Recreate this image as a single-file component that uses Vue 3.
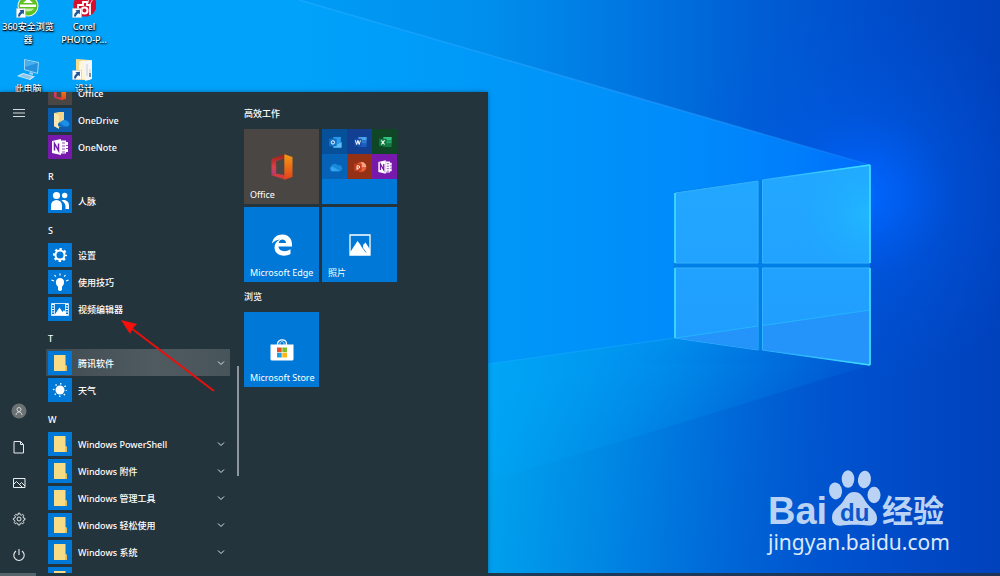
<script setup>
const shortcuts = [
  { icon: 'browser360', label: '360安全浏览器' },
  { icon: 'corel', label: 'Corel PHOTO-P...' },
  { icon: 'pc', label: '此电脑' },
  { icon: 'design', label: '设计' },
]

const rail = [
  { icon: 'user', label: '用户' },
  { icon: 'doc', label: '文档' },
  { icon: 'image', label: '图片' },
  { icon: 'cog', label: '设置' },
  { icon: 'power', label: '电源' },
]

const rows = [
  { icon: 'office', label: 'Office', tone: 'grey' },
  { icon: 'onedrive', label: 'OneDrive', tone: 'deep' },
  { icon: 'onenote', label: 'OneNote', tone: 'purple' },
  { heading: 'R' },
  { icon: 'people', label: '人脉' },
  { heading: 'S' },
  { icon: 'gear', label: '设置' },
  { icon: 'bulb', label: '使用技巧' },
  { icon: 'video', label: '视频编辑器' },
  { heading: 'T' },
  { icon: 'folder', label: '腾讯软件', folder: true, active: true },
  { icon: 'sun', label: '天气' },
  { heading: 'W' },
  { icon: 'folder', label: 'Windows PowerShell', folder: true },
  { icon: 'folder', label: 'Windows 附件', folder: true },
  { icon: 'folder', label: 'Windows 管理工具', folder: true },
  { icon: 'folder', label: 'Windows 轻松使用', folder: true },
  { icon: 'folder', label: 'Windows 系统', folder: true },
  { icon: 'folder', label: '', folder: true },
]

const minis = ['outlook', 'word', 'excel', 'cloud', 'ppt', 'onenote']
</script>

<template>
  <svg class="defs" aria-hidden="true">
    <defs>
      <linearGradient id="g-off" x1="0" y1="0" x2="0" y2="1">
        <stop offset="0" stop-color="#f59a12" /><stop offset="1" stop-color="#e2401b" />
      </linearGradient>
      <linearGradient id="g-off2" x1="0" y1="0" x2="0" y2="1">
        <stop offset="0" stop-color="#9c1f16" /><stop offset=".6" stop-color="#d8404a" /><stop offset="1" stop-color="#b13a80" />
      </linearGradient>
      <symbol id="i-office" viewBox="0 0 24 24">
        <path d="M14 1 3 5v14l4-1.500V7l7-2.500z" fill="url(#g-off2)" />
        <path d="M3 19l4-1.500 8 1.500v4z" fill="#d43b3f" />
        <path d="M14 1l7 2.500v17L14 23z" fill="url(#g-off)" />
      </symbol>
      <symbol id="i-onedrive" viewBox="0 0 24 24">
        <path d="M6 5l5-1h5v12l-6 4-4-2z" fill="#f3d488" />
        <path d="M6 5l5 2v14l-5-3z" fill="#fbe6ae" />
        <path d="M11 18.500a3 3 0 0 1 2-5 4 4 0 0 1 6-.5 3 3 0 0 1 1 5.500z" fill="#1a8fe3" />
        <path d="M11 18.500a3 3 0 0 1 0-4l6 4z" fill="#0f6cc4" />
      </symbol>
      <symbol id="i-onenote" viewBox="0 0 24 24">
        <path d="M13 5.500h5v1.500h2v10h-2v1.500h-5z" fill="#fff" />
        <path d="M14 8h3M14 11h3M14 14h3M14 17h3M18 10.500h2M18 13.500h2" stroke="#7719aa" stroke-width=".8" />
        <path d="M4 6l9-2v16l-9-2z" fill="#fff" />
        <path d="M6.500 15.500v-7l4 7v-7" fill="none" stroke="#7719aa" stroke-width="1.500" />
      </symbol>
      <symbol id="i-people" viewBox="0 0 24 24">
        <circle cx="8.500" cy="6.500" r="3.600" fill="#fff" />
        <circle cx="16.700" cy="6.500" r="2.700" fill="#fff" />
        <path d="M3 21v-4.500a5.500 5.500 0 0 1 11 0V21z" fill="#fff" />
        <path d="M13.500 11.500c4-1.500 7.500 1 7.500 5V20h-3.500c.5-4-1-7-4-8.500z" fill="#fff" />
      </symbol>
      <symbol id="i-gear" viewBox="0 0 24 24">
        <circle cx="12" cy="12" r="4.500" fill="none" stroke="#fff" stroke-width="2" />
        <circle cx="12" cy="12" r="6" fill="none" stroke="#fff" stroke-width="2" stroke-dasharray="2.400 2.312" stroke-dashoffset="1.200" />
      </symbol>
      <symbol id="i-bulb" viewBox="0 0 24 24">
        <path d="M10 20v-3.200c-3.200-2.800-2.800-8.800 2-8.800s5.200 6 2 8.800V20q-2 2-4 0z" fill="#fff" />
        <path d="M12 3.500v2M6.500 5l1.300 1.700M17.500 5l-1.300 1.700M3.500 10l2.500 1M20.500 10L18 11" stroke="#fff" stroke-width="1.200" />
      </symbol>
      <symbol id="i-video" viewBox="0 0 24 24">
        <path d="M3.500 6.500h17v12h-17zM6.500 6.500v12M17.500 6.500v12" fill="none" stroke="#fff" stroke-width=".8" />
        <path d="M5 7v11M19 7v11" stroke="#fff" stroke-dasharray="1 1.500" stroke-width="2" />
        <path d="M6.500 18l5-7.500 3 4.500 1.500-2 2 3v2.500z" fill="#fff" />
      </symbol>
      <symbol id="i-folder" viewBox="0 0 24 24">
        <path d="M6 4h11.500v10l1.500 1v5H6z" fill="#f7dc85" />
        <path d="M17.500 14l1.500 1v5h-2z" fill="#e8bd58" />
      </symbol>
      <symbol id="i-sun" viewBox="0 0 24 24">
        <circle cx="12" cy="12" r="4.500" fill="#fff" />
        <circle cx="12" cy="12" r="6.300" fill="none" stroke="#fff" stroke-width="1.600" stroke-dasharray="1.300 3.648" stroke-dashoffset=".65" />
      </symbol>
      <symbol id="i-user" viewBox="0 0 18 18">
        <circle cx="9" cy="9" r="7.500" fill="#6c7174" />
        <circle cx="9" cy="7.500" r="2" fill="none" stroke="#d5d8d9" />
        <path d="M6 13c.2-4 5.800-4 6 0" fill="none" stroke="#d5d8d9" />
      </symbol>
      <symbol id="i-doc" viewBox="0 0 18 18">
        <path d="M4 3.500h6.500l3 3v8.500H4zM10.500 3.500v3h3" fill="none" stroke="#e8ecee" />
      </symbol>
      <symbol id="i-image" viewBox="0 0 18 18">
        <path d="M3.500 4.500h11.500v9H3.500zM3.500 10.500l3-3 5.500 5.500M9.500 10.500l2-2 3.500 3.500" fill="none" stroke="#e8ecee" />
      </symbol>
      <symbol id="i-cog" viewBox="0 0 18 18">
        <circle cx="9" cy="9" r="2" fill="none" stroke="#e8ecee" />
        <path d="M8.200 3.200h1.600l.4 1.500 1.100.5 1.400-.8 1.100 1.100-.8 1.400.5 1.100 1.500.4v1.400l-1.500.4-.5 1.100.8 1.400-1.100 1.100-1.400-.8-1.100.5-.4 1.500H8.200l-.4-1.500-1.100-.5-1.400.8-1.100-1.100.8-1.400-.5-1.100L3.400 9.800V8.400L4.900 8l.5-1.100-.8-1.400 1.100-1.100 1.400.8 1.100-.5z" fill="none" stroke="#e8ecee" />
      </symbol>
      <symbol id="i-power" viewBox="0 0 18 18">
        <path d="M6 5a5.200 5.200 0 1 0 6 0M9 3v6" fill="none" stroke="#e8ecee" stroke-width="1.100" />
      </symbol>
      <symbol id="i-edge" viewBox="0 0 24 24">
        <path d="M2 10.500C3 4.500 7 1.500 12.500 1.500c6 0 9.500 4.500 9.500 9.500v2.500H8.500c.3 5 7 6 12 2.800v4.700c-7 3.700-16 1-16-6.500 0-3.500 2-6.500 5.500-8-3.500.3-6 1.800-8 4zM8.700 10H16c0-4.500-6.500-5-7.300 0z" fill="#fff" />
      </symbol>
      <symbol id="i-photos" viewBox="0 0 24 24">
        <path d="M2 2h20v20H2z" fill="none" stroke="#fff" stroke-width="1.300" />
        <path d="M2 19.500L9.500 8l5.500 7v-3l2.500-2.500 4.500 7v5.500H2z" fill="#fff" />
        <path d="M13 12.500l5 7" stroke="#0078d7" stroke-width=".8" />
      </symbol>
      <symbol id="i-store" viewBox="0 0 24 24">
        <path d="M7.500 7V6c0-5.500 9-5.500 9 0v1" fill="none" stroke="#fff" stroke-width="1.300" />
        <path d="M10 7V5.500C10 3 14 3 14 5.500V7" fill="none" stroke="#bfe0f8" />
        <path d="M.5 6.500h23v14.500q0 1.500-1.500 1.500H2q-1.500 0-1.500-1.500z" fill="#fff" />
        <path d="M7 9.500h4.700v4.700H7z" fill="#e8502a" /><path d="M12.300 9.500H17v4.700h-4.700z" fill="#7fba2a" />
        <path d="M7 14.800h4.700v4.700H7z" fill="#19a0e8" /><path d="M12.300 14.800H17v4.700h-4.700z" fill="#fdb813" />
      </symbol>
      <symbol id="i-outlook" viewBox="0 0 24 24">
        <path d="M10 6h9v11h-9z" fill="#2a9be8" /><path d="M10 12l5 3 5-3v7H10z" fill="#5cc0f5" />
        <path d="M5 8h9v9H5z" fill="#1170c8" /><circle cx="9.500" cy="12.500" r="2" fill="none" stroke="#fff" stroke-width="1.200" />
      </symbol>
      <symbol id="i-word" viewBox="0 0 24 24">
        <path d="M10 6h10v4H10z" fill="#4aa5ee" /><path d="M10 10h10v4H10z" fill="#2b7cd3" /><path d="M10 14h10v4H10z" fill="#1b5dbe" />
        <path d="M5 8h9v9H5z" fill="#174ea8" /><path d="M6.500 10l1.500 5 1.500-5 1.500 5 1.500-5" fill="none" stroke="#fff" stroke-width="1.200" />
      </symbol>
      <symbol id="i-excel" viewBox="0 0 24 24">
        <path d="M10 6h10v4H10z" fill="#33c481" /><path d="M10 10h10v4H10z" fill="#21a366" /><path d="M10 14h10v4H10z" fill="#157a43" />
        <path d="M5 8h9v9H5z" fill="#107c41" /><path d="M7.500 10l4 5M11.500 10l-4 5" stroke="#fff" stroke-width="1.300" />
      </symbol>
      <symbol id="i-cloud" viewBox="0 0 24 24">
        <path d="M8 17a3.500 3.500 0 0 1-.5-6.500 5 5 0 0 1 8-.5 3.600 3.600 0 0 1 2.500 7z" fill="#1987da" />
        <path d="M8 17a3.500 3.500 0 0 1 1-5.500l9 5.500z" fill="#35a4ee" />
      </symbol>
      <symbol id="i-ppt" viewBox="0 0 24 24">
        <circle cx="13.500" cy="12" r="6" fill="#e8603c" /><path d="M13.500 6a6 6 0 0 1 6 6h-6z" fill="#ffa084" />
        <path d="M5 8h9v9H5z" fill="#c43e1c" /><path d="M8.500 15.500v-5h1.500a1.500 1.500 0 0 1 0 3H8.500" fill="none" stroke="#fff" stroke-width="1.200" />
      </symbol>
      <symbol id="i-link" viewBox="0 0 10 10">
        <path d="M.5.500h9v9h-9z" fill="#fff" stroke="#b8c4cc" stroke-width=".6" />
        <path d="M2 8.500C2 6 3 4.800 4.600 3.700L3.500 2.300 8 1.800 7.800 6.200 6.400 5.200C4.800 6 4.300 7 4 8.500z" fill="#1f5596" />
      </symbol>
      <symbol id="i-browser360" viewBox="0 0 24 24">
        <circle cx="12" cy="10" r="10.500" fill="#f0fae8" /><circle cx="12" cy="10" r="9.500" fill="#5fc022" />
        <path d="M6 12.500h12c-2 4-10 4-12 0z" fill="#c9efa8" /><path d="M4 8.500h16v2.500H4z" fill="#fff" /><path d="M7 7l5-4.500L17 7z" fill="#fff" />
      </symbol>
      <symbol id="i-corel" viewBox="0 0 24 24">
        <circle cx="13" cy="9" r="11.500" fill="#d80f2c" />
        <path d="M6 19V9h5V6h4v3h3v10" fill="none" stroke="#fff" stroke-width="1.800" /><circle cx="12.500" cy="14.500" r="3" fill="none" stroke="#fff" stroke-width="2" />
        <path d="M16 7l1-6M18 8l3-5" stroke="#fff" stroke-width=".8" />
      </symbol>
      <symbol id="i-pc" viewBox="0 0 24 24">
        <path d="M8 1l15 3-1 12-14-4z" fill="#9ad4f6" /><path d="M9 2.300l13 2.600-1 9.800L9 11.200z" fill="#2590dc" />
        <path d="M9 2.300l13 2.600L9 9z" fill="#49aeee" />
        <path d="M1 18l6-3 12 3.500-5 3.500z" fill="#cfe9f8" /><path d="M3.500 18l4-2 9 2.700-3.500 2.300z" fill="#8cc7ea" />
        <path d="M14 14l3 1v2l-4-1z" fill="#9fd2ee" />
      </symbol>
      <symbol id="i-design" viewBox="0 0 24 24">
        <path d="M4 1l14 1v20H4z" fill="#f6dc8c" /><path d="M7 4l5-2 2 2v18l-7-2z" fill="#fdf5dc" />
        <path d="M12 3l8-1v19l-7 2z" fill="#f4f6f7" /><path d="M15 6v12M18 11v8" stroke="#c9cfd2" /><path d="M17 15h2v4h-2z" fill="#87929a" />
      </symbol>
    </defs>
  </svg>

  <main class="desktop">
    <svg class="wallpaper" viewBox="0 0 1000 576" preserveAspectRatio="none" aria-hidden="true">
      <defs>
        <linearGradient id="w-base" x1="0" y1="0" x2="1" y2="0">
          <stop offset="0" stop-color="#00a6fb" /><stop offset=".25" stop-color="#00a0f8" /><stop offset=".49" stop-color="#008eec" />
          <stop offset=".62" stop-color="#0078e2" /><stop offset=".75" stop-color="#005fd5" /><stop offset=".87" stop-color="#004ecb" /><stop offset="1" stop-color="#0041bc" />
        </linearGradient>
        <radialGradient id="w-glow" gradientUnits="userSpaceOnUse" cx="865" cy="195" r="190">
          <stop offset="0" stop-color="#0068ff" /><stop offset=".2" stop-color="#0062fa" stop-opacity=".75" /><stop offset=".45" stop-color="#005cee" stop-opacity=".35" /><stop offset="1" stop-color="#0055e0" stop-opacity="0" />
        </radialGradient>
        <linearGradient id="w-beam" gradientUnits="userSpaceOnUse" x1="300" y1="0" x2="870" y2="0">
          <stop offset="0" stop-color="#00a2fa" /><stop offset=".4" stop-color="#0096f8" /><stop offset=".7" stop-color="#008afb" /><stop offset=".88" stop-color="#007dfb" /><stop offset="1" stop-color="#006cfc" />
        </linearGradient>
        <linearGradient id="w-low" gradientUnits="userSpaceOnUse" x1="488" y1="0" x2="870" y2="0">
          <stop offset="0" stop-color="#00a6f6" /><stop offset=".5" stop-color="#008eec" /><stop offset=".8" stop-color="#0078e2" /><stop offset="1" stop-color="#0064dc" />
        </linearGradient>
        <linearGradient id="w-fade" gradientUnits="userSpaceOnUse" x1="640" y1="345" x2="670" y2="440">
          <stop offset="0" stop-color="#fff" /><stop offset="1" stop-color="#fff" stop-opacity=".25" />
        </linearGradient>
        <mask id="w-mask"><path d="M488 330h400v160H488z" fill="url(#w-fade)" /></mask>
        <linearGradient id="w-floor" gradientUnits="userSpaceOnUse" x1="488" y1="450" x2="830" y2="490">
          <stop offset="0" stop-color="#00a3ee" /><stop offset=".35" stop-color="#0089e4" stop-opacity=".9" /><stop offset=".7" stop-color="#006cd8" stop-opacity=".6" /><stop offset="1" stop-color="#0055ce" stop-opacity="0" />
        </linearGradient>
        <linearGradient id="w-line" gradientUnits="userSpaceOnUse" x1="300" y1="0" x2="870" y2="0">
          <stop offset="0" stop-color="#20acff" stop-opacity=".6" /><stop offset=".6" stop-color="#309cff" stop-opacity=".5" /><stop offset="1" stop-color="#30a4ff" stop-opacity=".2" />
        </linearGradient>
        <linearGradient id="w-edge" gradientUnits="userSpaceOnUse" x1="762" y1="0" x2="870" y2="0">
          <stop offset="0" stop-color="#3de0ff" stop-opacity="0" /><stop offset="1" stop-color="#3de0ff" />
        </linearGradient>
        <linearGradient id="w-pane" gradientUnits="userSpaceOnUse" x1="0" y1="165" x2="0" y2="365">
          <stop offset="0" stop-color="#22a8ff" /><stop offset="1" stop-color="#209cff" />
        </linearGradient>
        <radialGradient id="w-shine" gradientUnits="userSpaceOnUse" cx="870" cy="215" r="80">
          <stop offset="0" stop-color="#20bcff" stop-opacity=".8" /><stop offset="1" stop-color="#20a8ff" stop-opacity="0" />
        </radialGradient>
      </defs>
      <path d="M0 0h1000v576H0z" fill="url(#w-base)" />
      <path d="M0 0h1000v576H0z" fill="url(#w-glow)" />
      <path d="M488 363l382 2 130 60v151H488z" fill="url(#w-floor)" />
      <path d="M0 0h299l571 165v200L675 338 0 432z" fill="url(#w-beam)" />
      <path d="M488 364l187-26 195 27-382 117z" fill="url(#w-low)" mask="url(#w-mask)" />
      <path d="M299 0l571 165" stroke="url(#w-line)" stroke-width="1.500" />
      <path d="M488 364l187-26" stroke="#18acff" opacity=".6" />
      <path d="M674 192l196-27v200l-196-27z" fill="#007fe6" />
      <g fill="url(#w-pane)" stroke="#34b2ff">
        <path d="M675 193l83-12v82h-83z" /><path d="M762.500 180l107.500-15v98H762.500z" />
        <path d="M675 268h83v82l-83-12z" /><path d="M762.500 268h107.500v97l-107.500-15z" />
      </g>
      <path d="M763 181l107-15v97H763z" fill="url(#w-shine)" />
      <path d="M676 338l82-11.500V350zM763 326l107-16v55l-107-15z" fill="#2594fa" />
      <path d="M676 338l82-12M763 325.500l107-15.500" stroke="#24b4ff" />
      <path d="M675 193v70M675 268v70M870 263v-98M870 268v97" fill="none" stroke="#3de0ff" stroke-width="1.600" />
      <path d="M870 165l-108 15M870 365l-108-15" stroke="url(#w-edge)" stroke-width="1.600" />
    </svg>

    <nav class="shortcuts" aria-label="桌面">
      <a v-for="s in shortcuts" :key="s.label" class="shortcut" href="#">
        <span class="shortcut-art">
          <svg class="shortcut-icon" aria-hidden="true"><use :href="'#i-' + s.icon" /></svg>
          <svg v-if="s.icon !== 'pc'" class="shortcut-link" aria-hidden="true"><use href="#i-link" /></svg>
        </span>
        <span class="shortcut-label">{{ s.label }}</span>
      </a>
    </nav>

    <section class="watermark">
      <svg class="logo" viewBox="0 0 180 58" role="img" aria-label="Baidu 经验">
        <g fill="#bad3f5">
          <text class="logo-latin" x="0" y="54">Bai</text>
          <ellipse cx="67.500" cy="21" rx="6.500" ry="8.500" transform="rotate(-8 67 21)" />
          <ellipse cx="80" cy="9" rx="6.300" ry="8.800" />
          <ellipse cx="96.500" cy="9.500" rx="6.500" ry="8.800" transform="rotate(8 96 9)" />
          <ellipse cx="106" cy="25" rx="6.500" ry="8.300" />
          <path d="M86 22c7 0 9 5 12 10 4 6 11 9 11 16 0 6-4 8-9 7.500-5-1-21-1-26 0-6 1-10-2-10-8 0-8 7-10 11-16 3-5 5-9.500 11-9.500z" />
          <text class="logo-cjk" x="114" y="52">经验</text>
        </g>
        <text class="logo-du" x="72" y="51">du</text>
      </svg>
      <p class="site">jingyan.baidu.com</p>
    </section>

    <section class="menu" aria-label="开始">
      <nav class="rail">
        <button class="rail-button" aria-label="展开">
          <svg class="rail-icon" viewBox="0 0 18 18"><path d="M3 5.500h12M3 9h12M3 12.500h12" stroke="#d5dadd" /></svg>
        </button>
        <span class="rail-space"></span>
        <button v-for="r in rail" :key="r.icon" class="rail-button" :aria-label="r.label">
          <svg class="rail-icon"><use :href="'#i-' + r.icon" /></svg>
        </button>
      </nav>

      <div class="list">
        <template v-for="(r, i) in rows" :key="i">
          <h2 v-if="r.heading" class="letter">{{ r.heading }}</h2>
          <button v-else class="row" :class="{ active: r.active }">
            <span class="badge" :class="r.tone"><svg class="badge-icon" :class="{ small: r.icon === 'office' }"><use :href="'#i-' + r.icon" /></svg></span>
            <span class="row-label">{{ r.label }}</span>
            <svg v-if="r.folder" class="chevron" viewBox="0 0 8 6"><path d="M1 1.500l3 3 3-3" fill="none" stroke="#dfe5e8" /></svg>
          </button>
        </template>
      </div>
      <div class="track"><span class="thumb"></span></div>

      <div class="tiles">
        <h2 class="group">高效工作</h2>
        <div class="grid">
          <button class="tile grey"><svg class="tile-icon large"><use href="#i-office" /></svg><span class="tile-label">Office</span></button>
          <button class="tile minis" aria-label="Office 应用">
            <span v-for="m in minis" :key="m" class="mini" :class="m"><svg class="mini-icon"><use :href="'#i-' + m" /></svg></span>
          </button>
          <button class="tile"><svg class="tile-icon"><use href="#i-edge" /></svg><span class="tile-label">Microsoft Edge</span></button>
          <button class="tile"><svg class="tile-icon"><use href="#i-photos" /></svg><span class="tile-label">照片</span></button>
        </div>
        <h2 class="group second">浏览</h2>
        <div class="grid">
          <button class="tile"><svg class="tile-icon"><use href="#i-store" /></svg><span class="tile-label">Microsoft Store</span></button>
        </div>
      </div>
    </section>

    <svg class="arrow" viewBox="0 0 96 74" aria-hidden="true">
      <path d="M93 71L10 8" stroke="#e8100c" stroke-width="2" />
      <path d="M0 0l16 4-4 4-3 6z" fill="#f5100c" />
    </svg>

    <footer class="taskbar"><button class="start" aria-label="开始"></button></footer>
  </main>
</template>

<style>
body {
  margin: 0;
}
</style>

<style scoped>
.defs {
  position: absolute;
  width: 0;
  height: 0;
}
.desktop {
  position: relative;
  height: 100vh;
  overflow: hidden;
  background: #0090f0;
  color: #fff;
  font: 500 9px/13px "Noto Sans", "Noto Sans CJK SC", sans-serif;
}
.desktop *,
.desktop {
  box-sizing: border-box;
}
button {
  margin: 0;
  padding: 0;
  border: 0;
  background: none;
  color: inherit;
  font: inherit;
  text-align: left;
}
h2,
p {
  margin: 0;
  font: inherit;
}
svg {
  display: block;
}
.wallpaper {
  position: absolute;
  inset: 0;
  width: 100%;
  height: 100%;
}
.shortcuts {
  position: absolute;
  top: -4px;
  left: 0;
  display: grid;
  grid-template-columns: 56px 56px;
  grid-auto-rows: 62px;
}
.shortcut {
  display: flex;
  flex-direction: column;
  align-items: center;
  color: #fff;
  text-align: center;
  text-decoration: none;
}
.shortcut-art {
  position: relative;
}
.shortcut-icon {
  width: 24px;
  height: 24px;
}
.shortcut-link {
  position: absolute;
  left: 0;
  bottom: 2px;
  width: 10px;
  height: 10px;
}
.shortcut-label {
  width: 56px;
  text-shadow: 0 1px 1px #000, 1px 1px 2px #000;
}
.watermark {
  position: absolute;
  right: 52px;
  bottom: 20px;
  width: 180px;
}
.logo {
  width: 100%;
  overflow: visible;
}
.logo-latin {
  font: bold 38px "Liberation Sans", sans-serif;
}
.logo-cjk {
  font: bold 31px "Noto Sans CJK SC", sans-serif;
}
.logo-du {
  fill: #0a58cc;
  font: bold 24px "Liberation Sans", sans-serif;
}
.site {
  color: #dce9fb;
  font-size: 21px;
  font-weight: 400;
  line-height: 28px;
}
.menu {
  position: absolute;
  top: 92px;
  bottom: 3px;
  left: 0;
  display: flex;
  width: 488px;
  overflow: hidden;
  background: #24343c;
  box-shadow: 0 0 4px rgba(0, 40, 80, 0.5);
}
.rail {
  display: flex;
  flex-direction: column;
  width: 37px;
  padding-top: 3px;
}
.rail-button {
  display: grid;
  place-items: center;
  height: 36px;
}
.rail-icon {
  width: 18px;
  height: 18px;
}
.rail-space {
  flex: 1;
}
.list {
  width: 184px;
  margin: -13px 7px 0 9px;
}
.row {
  display: flex;
  align-items: center;
  gap: 6px;
  width: 100%;
  height: 27px;
  padding: 2px 5px 1px 2px;
}
.row.active {
  background: linear-gradient(90deg, #3f4c52, #505b60 60%, #47545a);
}
.badge {
  display: grid;
  place-items: center;
  width: 24px;
  height: 24px;
  background: #0078d7;
}
.badge.grey,
.tile.grey {
  background: #4a4643;
}
.badge.deep {
  background: #0b5cad;
}
.badge.purple {
  background: #7719aa;
}
.badge-icon {
  width: 24px;
  height: 24px;
}
.badge-icon.small {
  width: 16px;
  height: 16px;
}
.row-label {
  flex: 1;
  white-space: nowrap;
}
.chevron {
  width: 8px;
  height: 6px;
}
.letter {
  height: 27px;
  padding: 10px 0 0 2px;
}
.track {
  width: 2px;
  padding-top: 274px;
}
.thumb {
  display: block;
  height: 110px;
  background: #8b979c;
}
.tiles {
  margin-left: 5px;
  padding-top: 15px;
}
.group {
  padding-bottom: 9px;
}
.group.second {
  padding-top: 8px;
}
.grid {
  display: grid;
  grid-template-columns: 75px 75px;
  grid-auto-rows: 75px;
  gap: 3px;
}
.tile {
  position: relative;
  display: grid;
  place-items: center;
  background: #0078d7;
}
.tile-icon {
  width: 24px;
  height: 24px;
}
.tile-icon.large {
  width: 28px;
  height: 28px;
}
.tile-label {
  position: absolute;
  left: 6px;
  bottom: 3px;
  font-weight: 400;
  white-space: nowrap;
}
.minis {
  grid-template: repeat(3, 25px) / repeat(3, 25px);
}
.mini {
  display: grid;
  place-items: center;
  width: 25px;
  height: 25px;
}
.mini-icon {
  width: 20px;
  height: 20px;
}
.outlook {
  background: #06509a;
}
.word {
  background: #123f92;
}
.excel {
  background: #0f4726;
}
.cloud {
  background: #0562b6;
}
.ppt {
  background: #943016;
}
.onenote {
  background: #7719aa;
}
.arrow {
  position: absolute;
  top: 320px;
  left: 121px;
  width: 96px;
  height: 74px;
}
.taskbar {
  position: absolute;
  right: 0;
  bottom: 0;
  left: 0;
  height: 3px;
  background: linear-gradient(90deg, #22363f 48%, #1d3a5a 52%, #1c3458);
}
.start {
  display: block;
  width: 36px;
  height: 3px;
  background: #55636a;
}
</style>
